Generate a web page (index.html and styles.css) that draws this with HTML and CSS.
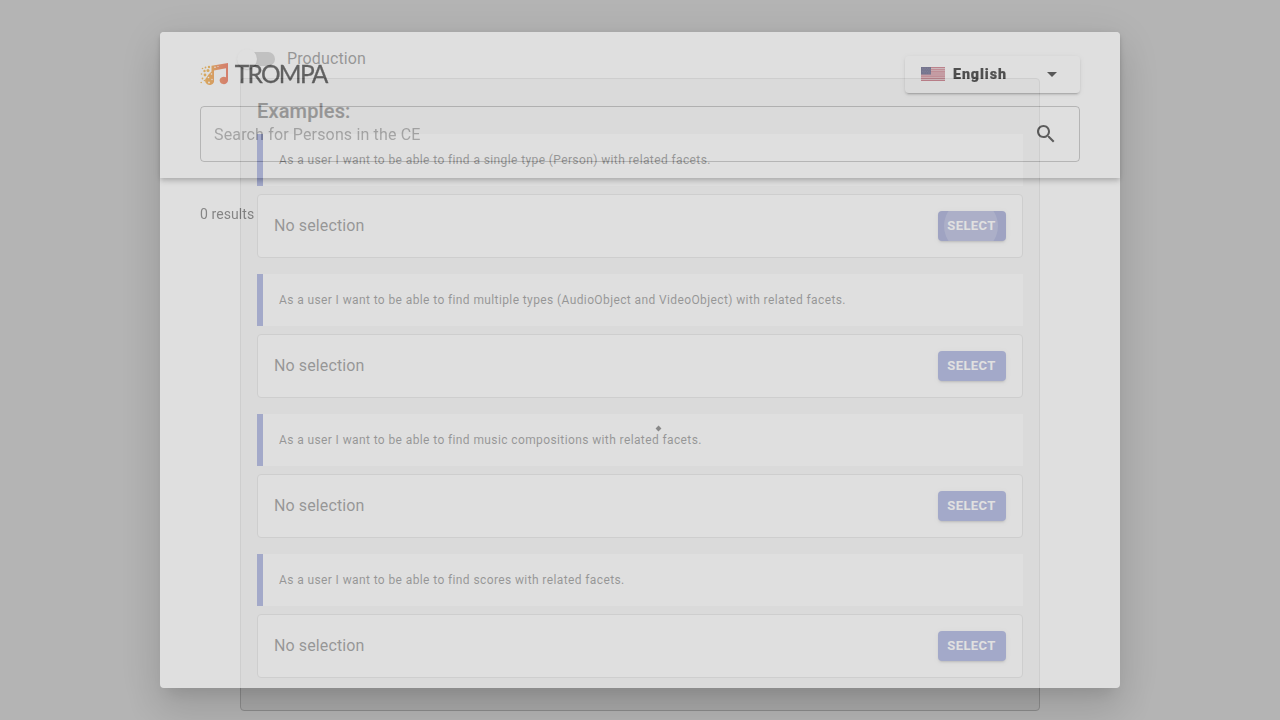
FILE: index.html
```
<!DOCTYPE html>
<html lang="en">
<head>
<meta charset="utf-8">
<title>Trompa</title>
<link rel="stylesheet" href="styles.css">
</head>
<body>
<main class="page">
  <label class="switch-row"><span class="switch"><span class="thumb"></span></span><span>Production</span></label>
  <section class="panel">
    <h2 class="title">Examples:</h2>
    <div class="quote">As a user I want to be able to find a single type (Person) with related facets.</div>
    <div class="card"><span>No selection</span><button class="select focused"><span class="ripple"></span><span class="label">Select</span></button></div>
    <div class="quote">As a user I want to be able to find multiple types (AudioObject and VideoObject) with related facets.</div>
    <div class="card"><span>No selection</span><button class="select"><span class="label">Select</span></button></div>
    <div class="quote">As a user I want to be able to find music compositions with related facets.</div>
    <div class="card"><span>No selection</span><button class="select"><span class="label">Select</span></button></div>
    <div class="quote">As a user I want to be able to find scores with related facets.</div>
    <div class="card"><span>No selection</span><button class="select"><span class="label">Select</span></button></div>
  </section>
</main>
<div class="modal">
  <div class="dialog">
    <header class="header">
      <div class="topbar">
        <svg class="logo" width="130" height="34" viewBox="0 0 130 34">
          <defs><linearGradient id="flame" gradientUnits="userSpaceOnUse" x1="0" x2="28" y1="0" y2="0"><stop offset="0" stop-color="#f3a21b"/><stop offset=".45" stop-color="#f08c20"/><stop offset=".7" stop-color="#ee6a30"/><stop offset="1" stop-color="#ea5434"/></linearGradient></defs>
          <path fill="url(#flame)" d="M11.500 8.700 28 6v17.500a4.200 3.700 0 1 1-2-3.200V11.300l-12 2.200V25a4.600 4.300 0 1 1-7.500-4.500l2-3 3-3z"/>
          <g fill="#f0a020"><circle cx="2.500" cy="11.500" r=".8"/><circle cx="5.500" cy="10.500" r=".9"/><circle cx="9" cy="10" r="1.200"/><circle cx="4.500" cy="14" r="1.200"/><circle cx="8" cy="13.500" r="1.500"/><circle cx="1.500" cy="17" r=".8"/><circle cx="5" cy="18" r="1.400"/><circle cx="2.500" cy="21.500" r=".9"/><circle cx="4.500" cy="23.500" r=".8"/><circle cx="1.200" cy="25.500" r=".8"/></g>
          <g fill="#fff"><circle cx="11.500" cy="17" r=".8"/><circle cx="8.500" cy="20.500" r=".8"/><circle cx="12" cy="22.500" r=".7"/><circle cx="9" cy="25.500" r=".9"/><circle cx="15" cy="10.200" r=".8"/><circle cx="18" cy="9.500" r=".6"/></g>
          <text class="logo-text" x="34.800" y="26.300" textLength="91.700" lengthAdjust="spacingAndGlyphs">TROMPA</text>
        </svg>
        <button class="language">
          <svg width="24" height="14" viewBox="0 0 24 14"><rect width="24" height="14" fill="#dfb9bf"/><path stroke="#c25b6c" stroke-width="1.080" d="M0 .54h24M0 2.690h24M0 4.850h24M0 7h24M0 9.150h24M0 11.310h24M0 13.460h24"/><rect width="10" height="7.540" fill="#43426f"/><path stroke="#8080a5" stroke-width=".5" stroke-dasharray=".7 1" d="M1 1.300h8.500M1.800 2.800h7.500M1 4.300h8.500M1.800 5.900h7.500"/></svg>
          <span class="language-name">English</span>
          <svg width="24" height="24" viewBox="0 0 24 24"><path fill="#111" d="m7 10 5 5 5-5z"/></svg>
        </button>
      </div>
      <div class="search"><span class="placeholder">Search for Persons in the CE</span>
        <svg width="24" height="24" viewBox="0 0 24 24"><path fill="#1c1c1c" d="M15.500 14h-.79l-.28-.27C15.410 12.590 16 11.110 16 9.500 16 5.910 13.090 3 9.500 3S3 5.910 3 9.500 5.910 16 9.500 16c1.610 0 3.090-.59 4.230-1.570l.27.28v.79l5 4.990L20.490 19l-4.990-5zm-6 0C7.010 14 5 11.990 5 9.500S7.010 5 9.500 5 14 7.010 14 9.500 11.990 14 9.500 14z"/></svg>
      </div>
    </header>
    <div class="results">0 results</div>
    <svg class="spinner" width="42" height="40" viewBox="0 0 42 40"><path d="m37 10 3-3" stroke="#666" stroke-width="4"/></svg>
  </div>
</div>
</body>
</html>
```
FILE: styles.css
```
* { box-sizing: border-box; }
html, body { height: 100%; }
body { margin: 0; overflow: hidden; background: #fbfbfb; font-family: Roboto, "Liberation Sans", sans-serif; font-size: 16px; color: rgba(0,0,0,.87); }
button { font-family: inherit; border: 0; }
.page { width: 800px; margin: 0 auto; padding-top: 39px; }
.switch-row { display: flex; align-items: center; height: 39px; gap: 12px; letter-spacing: .12px; color: #111; }
.switch { position: relative; width: 34px; height: 14px; margin-left: 1px; border-radius: 7px; background: #9c9c9c; }
.thumb { position: absolute; left: -4px; top: -3px; width: 20px; height: 20px; border-radius: 50%; background: #fafafa; box-shadow: 0 2px 1px -1px rgba(0,0,0,.2), 0 1px 1px rgba(0,0,0,.14), 0 1px 3px rgba(0,0,0,.12); }
.panel { padding: 16px 16px 32px; height: 633px; border: 1px solid #c4c4c4; border-radius: 4px; background: #ececec; }
.title { margin: 0; height: 39px; line-height: 32px; font-size: 20px; font-weight: 500; letter-spacing: .15px; color: #111; -webkit-text-stroke: .2px #111; }
.quote { height: 52px; padding: 0 16px; display: flex; align-items: center; border-left: 6px solid #3f51b5; background: #fafafa; font-size: 12px; letter-spacing: .39px; color: #111; }
.card { height: 64px; margin: 8px 0 16px; padding: 0 16px 1px; display: flex; align-items: center; justify-content: space-between; border: 1px solid #c4c4c4; border-radius: 4px; background: #fafafa; letter-spacing: .12px; color: #111; }
.select { position: relative; width: 68px; height: 30px; margin-top: 1px; padding: 0 1px 2px 0; border-radius: 4px; background: #3f51b5; color: #fff; font-size: 13px; font-weight: 700; letter-spacing: .38px; text-transform: uppercase; box-shadow: 0 3px 1px -2px rgba(0,0,0,.2), 0 2px 2px rgba(0,0,0,.14), 0 1px 5px rgba(0,0,0,.12); }
.select.focused { overflow: hidden; background: #303f9f; }
.ripple { position: absolute; width: 54px; height: 54px; left: 6px; top: -12px; border-radius: 50%; background: rgba(255,255,255,.2); }
.label { position: relative; }
.modal { position: fixed; inset: 0; display: flex; align-items: center; justify-content: center; background: rgba(0,0,0,.283); }
.dialog { position: relative; width: 960px; height: 656px; border-radius: 4px; background: #fff; opacity: .566; box-shadow: 0 11px 15px -7px rgba(0,0,0,.2), 0 24px 38px 3px rgba(0,0,0,.14), 0 9px 46px 8px rgba(0,0,0,.12); }
.header { height: 146px; padding: 24px 40px 16px; border-radius: 4px 4px 0 0; background: #fff; box-shadow: 0 2px 4px -1px rgba(0,0,0,.2), 0 4px 5px rgba(0,0,0,.14), 0 1px 10px rgba(0,0,0,.12); }
.topbar { height: 50px; display: flex; align-items: flex-start; justify-content: space-between; }
.logo { margin-top: 1px; overflow: visible; }
.logo-text { font-family: Lato, sans-serif; font-size: 25.5px; letter-spacing: -1.8px; fill: #222; stroke: #222; stroke-width: .3; }
.language { width: 175px; height: 37px; display: flex; align-items: center; padding: 0 16px 1px; border-radius: 4px; background: #fff; color: #000; box-shadow: 0 3px 1px -2px rgba(0,0,0,.2), 0 2px 2px rgba(0,0,0,.14), 0 1px 5px rgba(0,0,0,.12); }
.language-name { flex: 1; margin-left: 8px; text-align: left; font-size: 14.3px; font-weight: 900; letter-spacing: .9px; -webkit-text-stroke: .2px #000; }
.search { height: 56px; padding: 0 21px 0 13px; display: flex; align-items: center; justify-content: space-between; border: 1px solid rgba(0,0,0,.29); border-radius: 4px; }
.placeholder { color: #999; letter-spacing: .15px; }
.results { padding: 28px 40px; font-size: 14px; line-height: 17px; color: #606060; letter-spacing: .08px; }
.spinner { position: absolute; left: 460px; top: 388px; }
```
